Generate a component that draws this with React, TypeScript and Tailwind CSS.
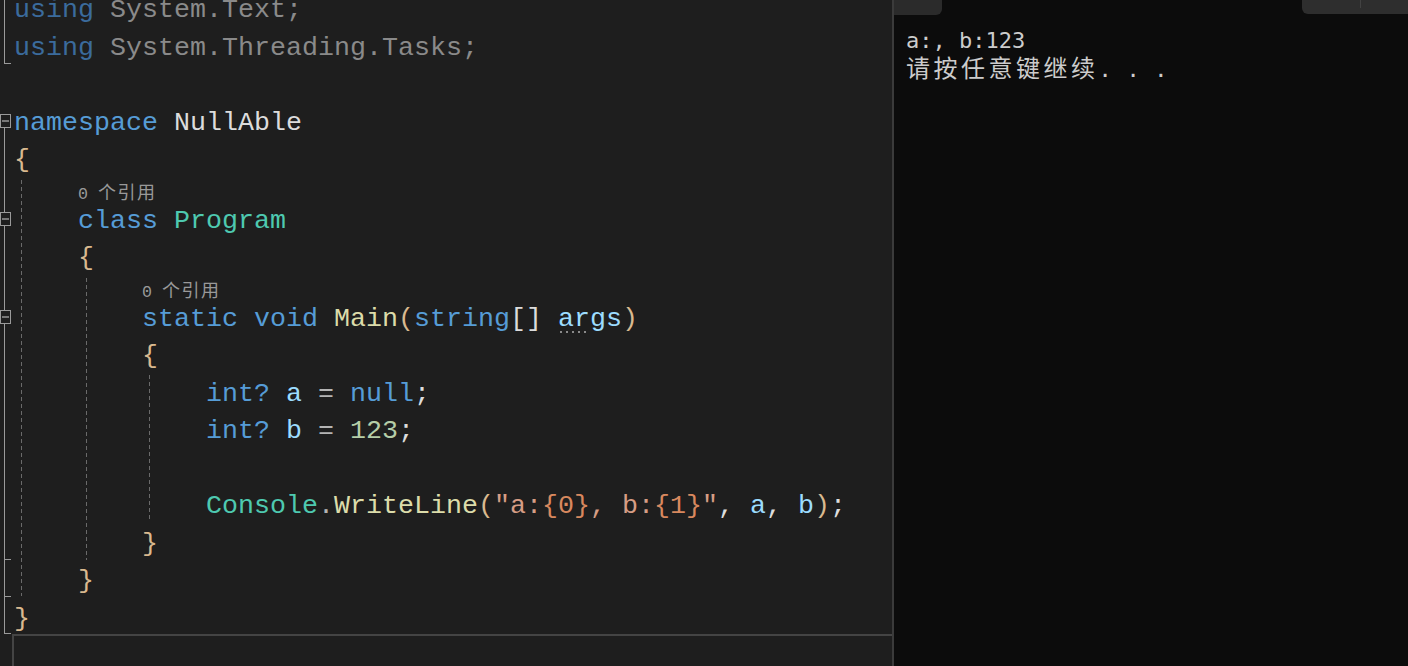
import React from "react";

type Tok = [string, string];

const kw = "text-[#569cd6]";
const kwDim = "text-[#3b6b9c]";
const dim = "text-[#8a8a8a]";
const type = "text-[#4ec9b0]";
const method = "text-[#dcdcaa]";
const param = "text-[#9cdcfe]";
const plain = "text-[#dcdcdc]";
const op = "text-[#b4b4b4]";
const brace = "text-[#d9b98f]";
const num = "text-[#b5cea8]";
const str = "text-[#d69d85]";
const fmt = "text-[#d8885e]";

type Row =
  | { kind: "code"; toks: Tok[]; args?: boolean }
  | { kind: "lens"; pad: string };

const rows: Row[] = [
  { kind: "code", toks: [["using", kwDim], [" ", plain], ["System.Text;", dim]] },
  { kind: "code", toks: [["using", kwDim], [" ", plain], ["System.Threading.Tasks;", dim]] },
  { kind: "code", toks: [] },
  { kind: "code", toks: [["namespace", kw], [" ", plain], ["NullAble", plain]] },
  { kind: "code", toks: [["{", brace]] },
  { kind: "lens", pad: "pl-[78px]" },
  { kind: "code", toks: [["    ", plain], ["class", kw], [" ", plain], ["Program", type]] },
  { kind: "code", toks: [["    ", plain], ["{", brace]] },
  { kind: "lens", pad: "pl-[142px]" },
  {
    kind: "code",
    args: true,
    toks: [
      ["        ", plain],
      ["static", kw],
      [" ", plain],
      ["void", kw],
      [" ", plain],
      ["Main", method],
      ["(", brace],
      ["string", kw],
      ["[]", plain],
      [" ", plain],
      ["args", param],
      [")", brace],
    ],
  },
  { kind: "code", toks: [["        ", plain], ["{", brace]] },
  {
    kind: "code",
    toks: [
      ["            ", plain],
      ["int?", kw],
      [" ", plain],
      ["a", param],
      [" ", plain],
      ["=", op],
      [" ", plain],
      ["null", kw],
      [";", plain],
    ],
  },
  {
    kind: "code",
    toks: [
      ["            ", plain],
      ["int?", kw],
      [" ", plain],
      ["b", param],
      [" ", plain],
      ["=", op],
      [" ", plain],
      ["123", num],
      [";", plain],
    ],
  },
  { kind: "code", toks: [] },
  {
    kind: "code",
    toks: [
      ["            ", plain],
      ["Console", type],
      [".", op],
      ["WriteLine", method],
      ["(", brace],
      ['"a:', str],
      ["{0}", fmt],
      [", b:", str],
      ["{1}", fmt],
      ['"', str],
      [", ", plain],
      ["a", param],
      [", ", plain],
      ["b", param],
      [")", brace],
      [";", plain],
    ],
  },
  { kind: "code", toks: [["        ", plain], ["}", brace]] },
  { kind: "code", toks: [["    ", plain], ["}", brace]] },
  { kind: "code", toks: [["}", brace]] },
];

function Outline() {
  const c = "#9a9a9a";
  const boxes = [114.5, 212.5, 310.5];
  const ticks = [559.5, 596.5, 633.5];
  return (
    <svg className="absolute left-0 top-0" width="14" height="640" viewBox="0 0 14 640">
      <line x1="4.5" y1="0" x2="4.5" y2="63.5" stroke={c} strokeWidth="1" />
      <line x1="4" y1="63.5" x2="11" y2="63.5" stroke={c} strokeWidth="1" />
      <line x1="4.5" y1="127" x2="4.5" y2="633.5" stroke={c} strokeWidth="1" />
      {ticks.map((y) => (
        <line key={y} x1="4" y1={y} x2="11" y2={y} stroke={c} strokeWidth="1" />
      ))}
      {boxes.map((y) => (
        <g key={y}>
          <rect x="0.5" y={y} width="10" height="13" fill="#1e1e1e" stroke={c} strokeWidth="1" />
          <line x1="2" y1={y + 6.5} x2="9" y2={y + 6.5} stroke="#d0d0d0" strokeWidth="1" />
        </g>
      ))}
    </svg>
  );
}

function Guide({ x, top, bottom }: { x: number; top: number; bottom: number }) {
  return (
    <div
      className="absolute w-px bg-[repeating-linear-gradient(to_bottom,#6a6a6a_0px,#6a6a6a_4px,transparent_4px,transparent_7px)]"
      style={{ left: x, top, height: bottom - top }}
    />
  );
}

export default function App() {
  return (
    <div className="flex h-[666px] w-[1408px] overflow-hidden bg-[#1e1e1e]">
      {/* Editor */}
      <div className="flex w-[892px] flex-col bg-[#1e1e1e]">
        <div className="relative h-[634px] overflow-hidden">
          <div className="-mt-2 flex flex-col font-['Liberation_Mono',monospace] text-[26.67px]">
            {rows.map((r, i) =>
              r.kind === "lens" ? (
                <div key={i} className={`h-[23px] whitespace-pre leading-[23px] text-[#999999] ${r.pad}`}>
                  <span className="text-[16.67px]">0 </span>
                  <span className="font-['Noto_Sans_CJK_SC',sans-serif] text-[18px] tracking-[1.5px]">个引用</span>
                </div>
              ) : (
                <div key={i} className="relative h-[37.5px] whitespace-pre pl-[14px] leading-[37.5px]">
                  {r.toks.map(([t, c], j) => (
                    <span key={j} className={c}>
                      {t}
                    </span>
                  ))}
                  {r.args && (
                    <svg className="absolute left-[560px] top-[30px]" width="28" height="3" viewBox="0 0 28 3">
                      {[1, 7, 13, 19, 25].map((x) => (
                        <rect key={x} x={x - 1} y="0" width="2" height="2" fill="#8a8a8a" />
                      ))}
                    </svg>
                  )}
                </div>
              )
            )}
          </div>
          <Outline />
          <Guide x={21} top={180} bottom={596} />
          <Guide x={86} top={278} bottom={560} />
          <Guide x={149} top={375} bottom={522} />
        </div>
        <div className="ml-[12px] flex-1 border-l-2 border-t-2 border-[#444444] bg-[#1e1e1e]" />
      </div>

      {/* Divider */}
      <div className="w-[2px] bg-[#3b3b3b]" />

      {/* Console */}
      <div className="flex flex-1 flex-col bg-[#0c0c0c]">
        <div className="flex h-[15px] justify-between">
          <div className="h-[15px] w-[48px] rounded-br-[6px] bg-[#2b2b2b]" />
          <div className="flex h-[14px] w-[106px] rounded-bl-[6px] bg-[#2e2e2e]">
            <div className="ml-[58px] h-[8px] w-px bg-[#424242]" />
          </div>
        </div>
        <div className="pl-[12px] pt-[11px] font-['DejaVu_Sans_Mono','Noto_Sans_CJK_SC',monospace] text-[22px] leading-[30px] text-[#cccccc]">
          <div className="whitespace-pre">a:, b:123</div>
          <div className="-mt-[4px] whitespace-pre">
            <span className="font-['Noto_Sans_CJK_SC',sans-serif] text-[24px] tracking-[3.5px]">请按任意键继续</span>
            <span className="tracking-[0.7px]">. . .</span>
          </div>
        </div>
      </div>
    </div>
  );
}
